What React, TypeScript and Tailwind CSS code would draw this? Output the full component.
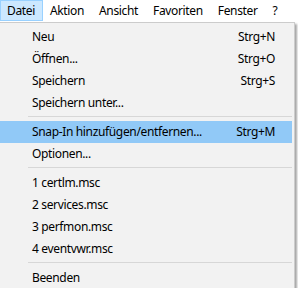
import React from "react";

type Entry = { label: string; shortcut?: string; active?: boolean } | "sep";

const entries: Entry[] = [
	{ label: "Neu", shortcut: "Strg+N" },
	{ label: "Öffnen...", shortcut: "Strg+O" },
	{ label: "Speichern", shortcut: "Strg+S" },
	{ label: "Speichern unter..." },
	"sep",
	{ label: "Snap-In hinzufügen/entfernen...", shortcut: "Strg+M", active: true },
	{ label: "Optionen..." },
	"sep",
	{ label: "1 certlm.msc" },
	{ label: "2 services.msc" },
	{ label: "3 perfmon.msc" },
	{ label: "4 eventvwr.msc" },
	"sep",
	{ label: "Beenden" },
];

const menus = ["Datei", "Aktion", "Ansicht", "Favoriten", "Fenster", "?"];

export default function App() {
	return (
		<div
			className="h-[288px] w-[298px] overflow-hidden bg-white text-[12px] tracking-[-0.35px] text-black"
			style={{ fontFamily: '"Segoe UI", "Noto Sans", sans-serif' }}
		>
			{/* Menu bar */}
			<div className="flex h-[22px] items-stretch bg-white">
				{menus.map((m, i) => (
					<div
						key={m}
						className={
							i === 0
								? "flex h-[21px] items-center border border-[#99d1ff] bg-[#cce8ff] pl-[6px] pr-[7px]"
								: "flex h-[21px] items-center pl-[7px] pr-[8px]"
						}
					>
						{m}
					</div>
				))}
			</div>

			{/* Dropdown */}
			<div className="w-[295px] border-t border-r border-[#cccccc] bg-[#f2f2f2] pt-[3px] pr-[2px] shadow-[2px_2px_2px_rgba(0,0,0,0.35)]">
				{entries.map((e, i) =>
					e === "sep" ? (
						<div key={i} className="h-[7px] pt-[2px] pl-[28px]">
							<div className="h-px bg-[#d7d7d7]" />
						</div>
					) : (
						<div
							key={i}
							className={`flex h-[22px] items-center justify-between pl-[32px] pr-[17px] ${
								e.active ? "bg-[#91c9f7]" : ""
							}`}
						>
							<span>{e.label}</span>
							{e.shortcut && <span>{e.shortcut}</span>}
						</div>
					),
				)}
			</div>
		</div>
	);
}
